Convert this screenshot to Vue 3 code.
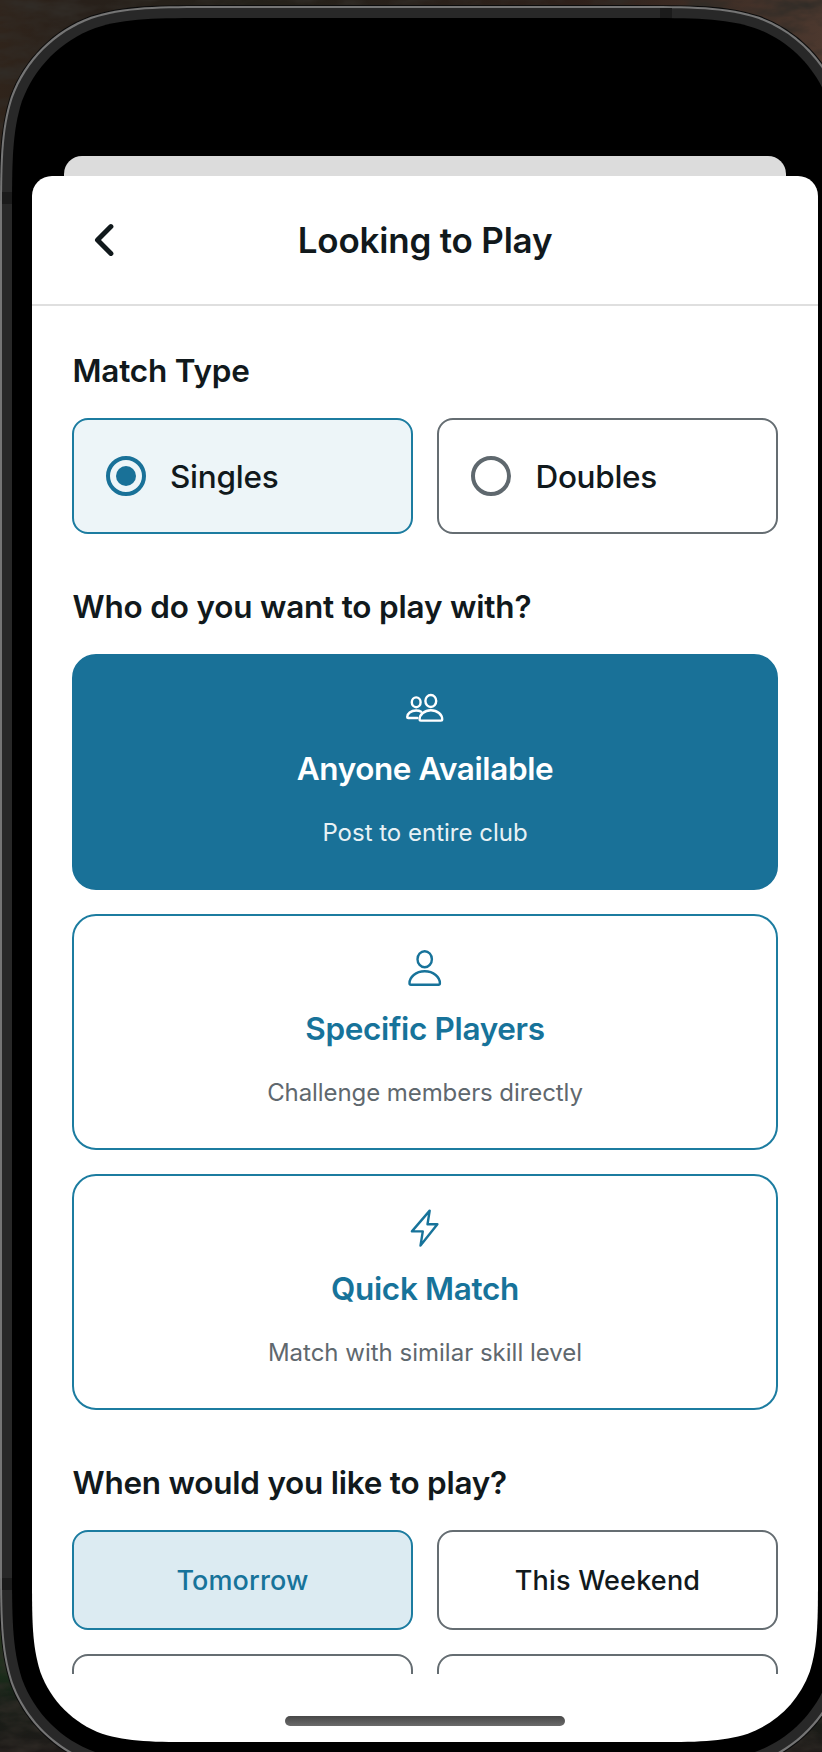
<script setup>
import { ref } from 'vue'

// Rounded rectangle with continuous (smoothed) corners, as an SVG path.
function squircle(x, y, w, h, r) {
  const a = 1.52866 * r, b = 1.08849 * r, c = 0.86841 * r, d = 0.63149 * r
  const e = 0.07491 * r, f = 0.37282 * r, g = 0.16906 * r
  const R = x + w, B = y + h
  return [
    `M${x + a} ${y}H${R - a}`,
    `C${R - b} ${y} ${R - c} ${y} ${R - d} ${y + e}C${R - f} ${y + g} ${R - g} ${y + f} ${R - e} ${y + d}C${R} ${y + c} ${R} ${y + b} ${R} ${y + a}`,
    `V${B - a}`,
    `C${R} ${B - b} ${R} ${B - c} ${R - e} ${B - d}C${R - g} ${B - f} ${R - f} ${B - g} ${R - d} ${B - e}C${R - c} ${B} ${R - b} ${B} ${R - a} ${B}`,
    `H${x + a}`,
    `C${x + b} ${B} ${x + c} ${B} ${x + d} ${B - e}C${x + f} ${B - g} ${x + g} ${B - f} ${x + e} ${B - d}C${x} ${B - c} ${x} ${B - b} ${x} ${B - a}`,
    `V${y + a}`,
    `C${x} ${y + b} ${x} ${y + c} ${x + e} ${y + d}C${x + g} ${y + f} ${x + f} ${y + g} ${x + d} ${y + e}C${x + c} ${y} ${x + b} ${y} ${x + a} ${y}Z`,
  ].join('')
}

const rim = squircle(0, 6, 850, 1768, 144)
const band = squircle(2, 8, 846, 1764, 142.5)
const bezel = squircle(12, 18, 826, 1744, 132)
const screenClip = { clipPath: `path('${squircle(0, 0, 786, 1704, 111)}')` }

const matchType = ref('Singles')
const matchTypes = ['Singles', 'Doubles']

const audience = ref('anyone')
const audiences = [
  { id: 'anyone', title: 'Anyone Available', note: 'Post to entire club' },
  { id: 'specific', title: 'Specific Players', note: 'Challenge members directly' },
  { id: 'quick', title: 'Quick Match', note: 'Match with similar skill level' },
]

const day = ref('Tomorrow')
const days = ['Tomorrow', 'This Weekend']
</script>

<template>
  <div class="stage">
    <svg class="device" width="822" height="1752" viewBox="0 0 822 1752">
      <defs>
        <filter id="rock" x="0" y="0" width="100%" height="100%">
          <feTurbulence type="fractalNoise" baseFrequency="0.025 0.06" numOctaves="4" seed="8" />
          <feColorMatrix values="0 0 0 0 0.03  0 0 0 0 0.025  0 0 0 0 0.02  2.2 0 0 0 -0.85" />
        </filter>
        <linearGradient id="topWall" x1="0" x2="1">
          <stop offset="0" stop-color="#30241b" />
          <stop offset="0.1" stop-color="#28201a" />
          <stop offset="0.3" stop-color="#24211a" />
          <stop offset="0.7" stop-color="#2e201a" />
          <stop offset="1" stop-color="#4c382e" />
        </linearGradient>
        <linearGradient id="lowWall" x1="0" y1="0" x2="0" y2="1">
          <stop offset="0" stop-color="#3a3020" />
          <stop offset="0.45" stop-color="#1c331c" />
          <stop offset="0.7" stop-color="#161d16" />
          <stop offset="1" stop-color="#1e1a18" />
        </linearGradient>
      </defs>
      <rect width="822" height="400" fill="url(#topWall)" />
      <rect y="1590" width="822" height="162" fill="url(#lowWall)" />
      <rect width="822" height="1752" filter="url(#rock)" />
      <path :d="rim" fill="none" stroke="#0c0c0c" stroke-width="2" />
      <path :d="rim" fill="#757575" />
      <path :d="band" fill="#282828" />
      <g fill="#1b1b1b">
        <rect x="2" y="192" width="11" height="12" />
        <rect x="2" y="1578" width="11" height="12" />
        <rect x="660" y="8" width="12" height="11" />
      </g>
      <path :d="bezel" fill="#000" />
    </svg>

    <main class="screen" :style="screenClip">
      <div class="sheet-behind"></div>
      <section class="sheet">
        <header class="bar">
          <svg class="back" width="40" height="40" viewBox="0 0 40 40">
            <path d="M22.9 6.600 9.500 20l13.400 13.400" />
          </svg>
          <h1>Looking to Play</h1>
        </header>

        <div class="body">
          <h2 class="h-type">Match Type</h2>
          <div class="pair">
            <button
              v-for="t in matchTypes"
              :key="t"
              class="option"
              :class="[t.toLowerCase(), { on: t === matchType }]"
              @click="matchType = t"
            >
              <span class="radio"></span><span class="label">{{ t }}</span>
            </button>
          </div>

          <h2 class="h-who">Who do you want to play with?</h2>
          <div class="stack">
            <button
              v-for="a in audiences"
              :key="a.id"
              class="card"
              :class="[a.id, { on: a.id === audience }]"
              @click="audience = a.id"
            >
              <svg v-if="a.id === 'anyone'" width="48" height="48" viewBox="0 0 48 48">
                <ellipse cx="29.800" cy="17" rx="5.400" ry="6" />
                <path d="M18.600 35.300c0-4.700 4.800-9.100 11.300-9.100s11.300 4.400 11.300 9.100c0 .9-.4 1.300-1.300 1.300H19.900c-.9 0-1.300-.4-1.300-1.300Z" />
                <ellipse cx="15.200" cy="18.300" rx="4.400" ry="4.900" />
                <path d="M16.300 34H7.200c-.7 0-1-.4-1-1.100 0-3.200 3.600-6.400 8.900-6.400 2 0 3.700.4 5.100 1.200" />
              </svg>
              <svg v-else-if="a.id === 'specific'" width="48" height="48" viewBox="0 0 48 48">
                <ellipse cx="23.700" cy="15.200" rx="7.200" ry="8" />
                <path d="M8.500 39.200c0-5.900 6.200-11.900 15.200-11.900s15.200 6 15.200 11.900c0 1.100-.5 1.500-1.500 1.500H10c-1 0-1.500-.4-1.500-1.500Z" />
              </svg>
              <svg v-else width="48" height="48" viewBox="0 0 48 48">
                <path d="M28.700 6.600 10.900 27.400h10.900L19.500 41.600 36.400 20.300H26.500Z" />
              </svg>
              <strong>{{ a.title }}</strong>
              <small>{{ a.note }}</small>
            </button>
          </div>

          <h2 class="h-when">When would you like to play?</h2>
          <div class="pair">
            <button
              v-for="d in days"
              :key="d"
              class="day"
              :class="{ on: d === day, weekend: d === 'This Weekend' }"
              @click="day = d"
            >
              <span>{{ d }}</span>
            </button>
            <button class="day"></button>
            <button class="day"></button>
          </div>
        </div>
        <div class="home"></div>
      </section>
    </main>
  </div>
</template>

<style>
html,
body {
  margin: 0;
  background: #0a0a0a;
}
</style>

<style scoped>
.stage {
  position: relative;
  width: 822px;
  height: 1752px;
  overflow: hidden;
  background: #100e0c;
  font-family: Inter, "Liberation Sans", sans-serif;
  color: #11191c;
}
.device {
  position: absolute;
  inset: 0;
}
.screen {
  position: relative;
  width: 786px;
  height: 1704px;
  margin: 38px 0 0 32px;
  display: flex;
  flex-direction: column;
}
.sheet-behind {
  flex: none;
  height: 20px;
  margin: 118px 32px 0;
  background: #dcdcdc;
  border-radius: 18px 18px 0 0;
}
.sheet {
  flex: 1;
  min-height: 0;
  display: flex;
  flex-direction: column;
  background: #fff;
  border-radius: 20px 20px 0 0;
}
.bar {
  flex: none;
  box-sizing: border-box;
  height: 130px;
  padding: 0 56px;
  display: grid;
  grid-template-columns: 40px 1fr 40px;
  align-items: center;
  border-bottom: 2px solid #dfdfdf;
}
.back {
  fill: none;
  stroke: #11191c;
  stroke-width: 5;
  stroke-linecap: round;
  stroke-linejoin: round;
}
h1 {
  margin: 0;
  text-align: center;
  font-size: 35px;
  font-weight: 600;
  line-height: 44px;
  letter-spacing: -0.2px;
  white-space: nowrap;
}
.body {
  flex: none;
  box-sizing: border-box;
  height: 1368px;
  padding: 40px 40px 0;
  overflow: hidden;
}
h2 {
  margin: 48px 0 24px;
  padding: 2px 0 0 0.5px;
  box-sizing: border-box;
  height: 48px;
  font-size: 31.5px;
  font-weight: 600;
  line-height: 46px;
  letter-spacing: -0.2px;
  white-space: nowrap;
}
.h-type {
  margin-top: 0;
}
.h-when {
  letter-spacing: -0.24px;
}
.pair {
  display: grid;
  grid-template-columns: 341px 341px;
  gap: 24px;
}
button {
  box-sizing: border-box;
  margin: 0;
  padding: 0;
  font: inherit;
  color: inherit;
  background: #fff;
  border: 2px solid #656d72;
  border-radius: 16px;
  white-space: nowrap;
}
.option {
  height: 116px;
  padding-left: 32px;
  display: flex;
  align-items: center;
  gap: 24px;
  font-size: 31.5px;
  font-weight: 500;
  letter-spacing: -0.25px;
}
.option.on {
  background: #edf5f8;
  border-color: #1c7ca0;
}
.radio {
  box-sizing: border-box;
  width: 40px;
  height: 40px;
  padding: 6px;
  border: 4px solid #5f686e;
  border-radius: 50%;
  background-clip: content-box;
}
.on .radio {
  border-color: #197198;
  background-color: #197198;
}
.doubles .label {
  margin-left: 0.5px;
  letter-spacing: -0.32px;
}
.stack {
  display: grid;
  gap: 24px;
}
.card {
  height: 236px;
  padding-top: 28px;
  display: flex;
  flex-direction: column;
  align-items: center;
  border-color: #1c7ca0;
  border-radius: 24px;
  color: #17739a;
}
.card svg {
  fill: none;
  stroke: currentColor;
  stroke-width: 2.4;
  stroke-linejoin: round;
  stroke-linecap: round;
}
.card strong {
  margin-top: 16px;
  font-size: 31.5px;
  font-weight: 600;
  line-height: 42px;
  letter-spacing: -0.33px;
}
.card.anyone strong {
  letter-spacing: -0.4px;
}
.card small {
  margin-top: 25px;
  font-size: 24px;
  font-weight: 400;
  line-height: 36px;
  color: #5f686e;
}
.card.specific small {
  letter-spacing: -0.08px;
}
.card.on {
  background: #197198;
  border-color: #197198;
  color: #fff;
}
.card.on small {
  color: #e8f1f5;
}
.day {
  height: 100px;
  font-size: 27px;
  font-weight: 500;
  letter-spacing: 0.14px;
}
.day.weekend {
  letter-spacing: 0.2px;
}
.day.on {
  background: #dcebf2;
  border-color: #1c7ca0;
  color: #17739a;
}
.home {
  flex: none;
  width: 280px;
  height: 10px;
  margin: 42px auto 0;
  border-radius: 5px;
  background: linear-gradient(#484848, #6b6b6b);
}
</style>
